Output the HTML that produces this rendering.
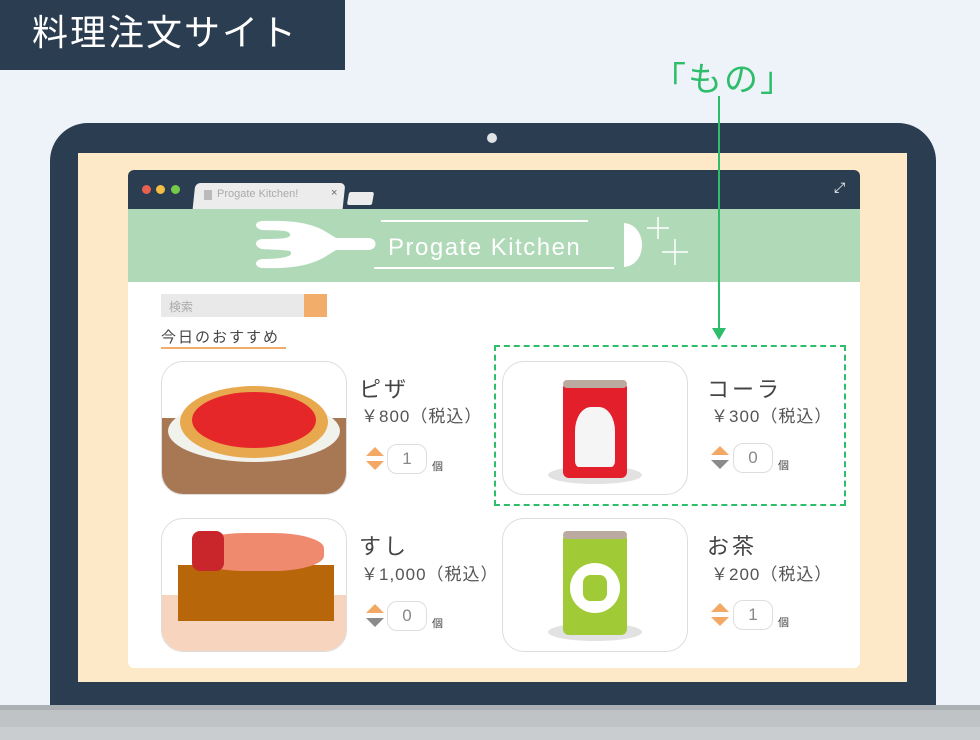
<!DOCTYPE html>
<html><head><meta charset="utf-8"><style>
*{margin:0;padding:0;box-sizing:border-box}
body{width:980px;height:740px;background:#eef3fa;position:relative;overflow:hidden;font-family:"Liberation Sans","Noto Sans CJK JP",sans-serif}
.a{position:absolute}
.card{position:absolute;width:186px;height:134px;border:1px solid #ddd;border-radius:22px;background:#fff;overflow:hidden}
.name{position:absolute;font-size:22px;color:#444;letter-spacing:3px}
.price{position:absolute;font-size:17px;color:#555;letter-spacing:1px}
.qty{position:absolute;width:40px;height:30px;border:1px solid #ddd;border-radius:10px;font-size:17px;color:#888;text-align:center;line-height:28px}
.ko{position:absolute;font-size:11px;color:#444}
.up{position:absolute;width:0;height:0;border-left:9px solid transparent;border-right:9px solid transparent;border-bottom:9px solid #f3a965}
.dn{position:absolute;width:0;height:0;border-left:9px solid transparent;border-right:9px solid transparent;border-top:9px solid #f3a965}
.g{border-top-color:#8a8a8a!important}
</style></head><body>
<div class="a" style="left:0;top:0;width:345px;height:70px;background:#2b3d50;color:#fff;font-size:36px;line-height:66px;padding-left:32px;letter-spacing:2px">料理注文サイト</div>
<div class="a" style="left:652px;top:52px;font-size:34px;color:#2ebd6b;letter-spacing:2px">「もの」</div>
<div class="a" style="left:50px;top:123px;width:886px;height:600px;background:#2b3d50;border-radius:38px 38px 0 0"></div>
<div class="a" style="left:487px;top:133px;width:10px;height:10px;border-radius:50%;background:#dfe3e6"></div>
<div class="a" style="left:78px;top:153px;width:829px;height:529px;background:#fde8c8"></div>
<div class="a" style="left:0;top:705px;width:980px;height:35px;background:#bfc3c6"></div>
<div class="a" style="left:0;top:705px;width:980px;height:5px;background:#aab0b4"></div>
<div class="a" style="left:0;top:727px;width:980px;height:13px;background:#c9cdd0"></div>
<!-- browser -->
<div class="a" style="left:128px;top:170px;width:732px;height:498px;background:#fff;border-radius:6px;overflow:hidden">
 <div class="a" style="left:0;top:0;width:732px;height:39px;background:#2b3d50"></div>
 <div class="a" style="left:14px;top:15px;width:9px;height:9px;border-radius:50%;background:#e8604f"></div>
 <div class="a" style="left:28px;top:15px;width:9px;height:9px;border-radius:50%;background:#f4bd44"></div>
 <div class="a" style="left:43px;top:15px;width:9px;height:9px;border-radius:50%;background:#77c94a"></div>
 <div class="a" style="left:66px;top:13px;width:150px;height:26px;background:#ececec;border-radius:5px 5px 0 0;transform:skewX(-6deg)"></div>
 <div class="a" style="left:76px;top:20px;width:8px;height:10px;background:#bbb"></div>
 <div class="a" style="left:89px;top:18px;font-size:11px;color:#aaa">Progate Kitchen!</div>
 <div class="a" style="left:203px;top:17px;font-size:11px;color:#666">×</div>
 <div class="a" style="left:220px;top:22px;width:25px;height:13px;background:#ececec;border-radius:2px;transform:skewX(-10deg)"></div>
 <div class="a" style="left:706px;top:9px;color:#fff;font-size:14px">⤢</div>
 <div class="a" style="left:0;top:39px;width:732px;height:73px;background:#b0d9b8"></div>
 <svg class="a" style="left:0;top:39px" width="732" height="73">
  <path d="M134 12 C165 11 185 14 200 24 L208 29 L240 29 C250 29 250 41 240 41 L208 41 L200 46 C185 56 165 60 134 59 C126 58 126 51 134 50 C160 50 166 46 162 42 C150 40 140 41 134 40 C126 38 126 31 134 30 C150 30 164 30 162 25 C160 20 145 22 134 21 C126 19 126 13 134 12Z" fill="#fff"/>
  <line x1="253" y1="12" x2="460" y2="12" stroke="#fff" stroke-width="2"/>
  <line x1="246" y1="59" x2="486" y2="59" stroke="#fff" stroke-width="2"/>
  <text x="260" y="46" font-family="Liberation Sans,sans-serif" font-size="24" fill="#fff" letter-spacing="1.5">Progate  Kitchen</text>
  <path d="M496 14 C520 16 520 56 496 58Z" fill="#fff"/>
  <path d="M530 8 V30 M519 19 H541 M547 30 V56 M534 43 H560" stroke="#fff" stroke-width="1.5"/>
 </svg>
 <div class="a" style="left:33px;top:124px;width:143px;height:23px;background:#e9e9e9;font-size:12px;color:#aaa;padding:4px 8px">検索</div>
 <div class="a" style="left:176px;top:124px;width:23px;height:23px;background:#f3ad6a"></div>
 <div class="a" style="left:33px;top:156px;font-size:15px;color:#444;letter-spacing:2px">今日のおすすめ</div>
 <div class="a" style="left:33px;top:177px;width:125px;height:2px;background:#f3ad6a"></div>
</div>
<div class="a" style="left:494px;top:345px;width:352px;height:161px;border:2px dashed #2ebd6b"></div>
<div class="a" style="left:718px;top:96px;width:2px;height:234px;background:#2ebd6b"></div>
<div class="a" style="left:712px;top:328px;width:0;height:0;border-left:7px solid transparent;border-right:7px solid transparent;border-top:12px solid #2ebd6b"></div>
<!-- pizza -->
<div class="card" style="left:161px;top:361px"><div class="a" style="left:0;top:56px;width:186px;height:80px;background:#a87754"></div>
 <div class="a" style="left:6px;top:38px;width:172px;height:62px;border-radius:50%;background:#f2f2ec"></div>
 <div class="a" style="left:18px;top:24px;width:148px;height:72px;border-radius:50%;background:#e8a84e"></div>
 <div class="a" style="left:30px;top:30px;width:124px;height:56px;border-radius:50%;background:#e6272a"></div></div>
<div class="name" style="left:359px;top:372px">ピザ</div>
<div class="price" style="left:361px;top:402px">￥800（税込）</div>
<div class="up" style="left:366px;top:447px"></div><div class="dn" style="left:366px;top:461px"></div>
<div class="qty" style="left:387px;top:444px">1</div><div class="ko" style="left:432px;top:458px">個</div>
<!-- cola -->
<div class="card" style="left:502px;top:361px">
 <div class="a" style="left:45px;top:104px;width:94px;height:18px;border-radius:50%;background:#e2e2e2"></div>
 <div class="a" style="left:60px;top:20px;width:64px;height:96px;background:#e21f2a;border-radius:6px"></div>
 <div class="a" style="left:60px;top:18px;width:64px;height:8px;background:#bbaaa0;border-radius:4px"></div>
 <div class="a" style="left:72px;top:45px;width:40px;height:60px;background:#f5f5f5;border-radius:40% 40% 10% 10%"></div></div>
<div class="name" style="left:707px;top:372px">コーラ</div>
<div class="price" style="left:711px;top:402px">￥300（税込）</div>
<div class="up" style="left:711px;top:446px"></div><div class="dn g" style="left:711px;top:460px"></div>
<div class="qty" style="left:733px;top:443px">0</div><div class="ko" style="left:778px;top:457px">個</div>
<!-- sushi -->
<div class="card" style="left:161px;top:518px"><div class="a" style="left:0;top:76px;width:186px;height:60px;background:#f7d4bd"></div>
 <div class="a" style="left:16px;top:46px;width:156px;height:56px;background:#b8660a"></div>
 <div class="a" style="left:32px;top:14px;width:130px;height:38px;border-radius:40%;background:#f08a6e"></div>
 <div class="a" style="left:30px;top:12px;width:32px;height:40px;border-radius:8px;background:#c8262a"></div></div>
<div class="name" style="left:359px;top:529px">すし</div>
<div class="price" style="left:361px;top:560px">￥1,000（税込）</div>
<div class="up" style="left:366px;top:604px"></div><div class="dn g" style="left:366px;top:618px"></div>
<div class="qty" style="left:387px;top:601px">0</div><div class="ko" style="left:432px;top:615px">個</div>
<!-- tea -->
<div class="card" style="left:502px;top:518px">
 <div class="a" style="left:45px;top:104px;width:94px;height:18px;border-radius:50%;background:#e2e2e2"></div>
 <div class="a" style="left:60px;top:14px;width:64px;height:102px;background:#a1cb36;border-radius:6px"></div>
 <div class="a" style="left:60px;top:12px;width:64px;height:8px;background:#bbaaa0;border-radius:4px"></div>
 <div class="a" style="left:67px;top:44px;width:50px;height:50px;background:#fff;border-radius:50%"></div>
 <div class="a" style="left:80px;top:56px;width:24px;height:26px;background:#a1cb36;border-radius:30%"></div></div>
<div class="name" style="left:707px;top:529px">お茶</div>
<div class="price" style="left:711px;top:560px">￥200（税込）</div>
<div class="up" style="left:711px;top:603px"></div><div class="dn" style="left:711px;top:617px"></div>
<div class="qty" style="left:733px;top:600px">1</div><div class="ko" style="left:778px;top:614px">個</div>
</body></html>
